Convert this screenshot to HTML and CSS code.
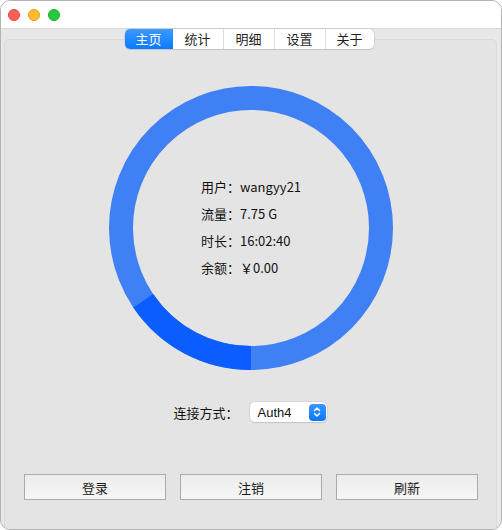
FILE: index.html
```html
<!DOCTYPE html>
<html>
<head>
<meta charset="utf-8">
<link rel="stylesheet" href="styles.css">
</head>
<body>
<div class="window">
  <div class="titlebar">
    <span class="light red"></span>
    <span class="light yellow"></span>
    <span class="light green"></span>
  </div>
  <div class="content">
    <div class="segmented">
      <div class="seg active">主页</div>
      <div class="seg">统计</div>
      <div class="seg wide">明细</div>
      <div class="seg wide">设置</div>
      <div class="seg">关于</div>
    </div>
    <div class="tabbox">
      <div class="ringwrap">
        <svg class="ring" width="284" height="284" viewBox="0 0 284 284">
          <circle cx="142" cy="142" r="130" fill="none" stroke="#3f81f5" stroke-width="24"/>
          <path d="M142 272 A130 130 0 0 1 34.2 214.7" fill="none" stroke="#0b5dff" stroke-width="24"/>
        </svg>
        <div class="info">
          <div class="line">用户：wangyy21</div>
          <div class="line">流量：7.75 G</div>
          <div class="line">时长：16:02:40</div>
          <div class="line">余额：￥0.00</div>
        </div>
      </div>
      <div class="connrow">
        <span class="connlabel">连接方式：</span>
        <div class="popup">
          <span class="popup-text">Auth4</span>
          <span class="stepper">
            <svg width="10" height="12" viewBox="0 0 10 12">
              <path d="M2.5 4.5 L5 2 L7.5 4.5" fill="none" stroke="#fff" stroke-width="1.5" stroke-linecap="round" stroke-linejoin="round"/>
              <path d="M2.5 7.5 L5 10 L7.5 7.5" fill="none" stroke="#fff" stroke-width="1.5" stroke-linecap="round" stroke-linejoin="round"/>
            </svg>
          </span>
        </div>
      </div>
      <div class="buttons">
        <button class="btn">登录</button>
        <button class="btn">注销</button>
        <button class="btn">刷新</button>
      </div>
    </div>
  </div>
</div>
</body>
</html>
```

FILE: styles.css
```css
* { box-sizing: border-box; }
html, body {
  margin: 0;
  padding: 0;
  background: #ffffff;
}
body {
  font-family: "Noto Sans CJK SC", "Noto Sans", "Liberation Sans", sans-serif;
  font-size: 13px;
  color: #1a1a1a;
}
.window {
  width: 502px;
  height: 530px;
  border: 1px solid #b4b4b4;
  border-radius: 10px;
  overflow: hidden;
  display: flex;
  flex-direction: column;
  background: #e8e8e8;
}
.titlebar {
  height: 28px;
  flex: none;
  background: #ffffff;
  border-bottom: 1px solid #d6d6d6;
  display: flex;
  align-items: center;
  gap: 8px;
  padding-left: 7px;
}
.light {
  width: 12px;
  height: 12px;
  border-radius: 50%;
  display: block;
}
.red { background: #fe5f57; border: 0.5px solid #e14640; }
.yellow { background: #febc2e; border: 0.5px solid #dfa023; }
.green { background: #28c840; border: 0.5px solid #1eab2e; }
.content {
  flex: 1;
  display: flex;
  flex-direction: column;
  align-items: center;
  padding: 0 4px 0 3px;
}
.segmented {
  position: relative;
  z-index: 2;
  display: flex;
  height: 20px;
  margin-bottom: -11px;
  background: #ffffff;
  border-radius: 5px;
  box-shadow: 0 0 0 0.5px #c4c4c4, 0 1px 1px rgba(0,0,0,0.12);
  margin-left: -3px;
}
.seg {
  width: 50px;
  height: 20px;
  line-height: 20px;
  text-align: center;
  font-size: 13px;
  color: #1f1f1f;
  border-left: 1px solid #dedede;
}
.seg.wide { width: 51px; }
.seg:first-child {
  border-left: none;
  width: 48px;
}
.seg:last-child { width: 49px; }
.seg.active {
  background: linear-gradient(#3c99ff, #0a7aff);
  color: #ffffff;
  border-radius: 5px 0 0 5px;
}
.seg.active + .seg { border-left: none; }
.tabbox {
  align-self: stretch;
  flex: 1;
  border: 1px solid #dadada;
  border-bottom: none;
  border-radius: 5px 5px 0 0;
  background: #e4e4e4;
  display: flex;
  flex-direction: column;
  align-items: center;
  margin-top: 1px;
}
.ringwrap {
  display: grid;
  margin-top: 46px;
  margin-left: 1px;
}
.ring {
  grid-area: 1 / 1;
  display: block;
}
.info {
  grid-area: 1 / 1;
  align-self: center;
  justify-self: center;
  width: 100px;
  margin-top: -3px;
}
.line {
  height: 27px;
  line-height: 27px;
  font-size: 13px;
  color: #111;
  white-space: nowrap;
}
.connrow {
  display: flex;
  align-items: center;
  margin-top: 32px;
  margin-left: -1px;
}
.connlabel {
  width: 76px;
  font-size: 13px;
  color: #111;
}
.popup {
  width: 77px;
  height: 20px;
  background: #ffffff;
  border-radius: 5px;
  box-shadow: 0 0 0 0.5px #c8c8c8, 0 1px 1px rgba(0,0,0,0.15);
  display: flex;
  align-items: center;
  justify-content: space-between;
  padding: 0 1px 0 8px;
}
.popup-text {
  font-family: "Liberation Sans", "Noto Sans", sans-serif;
  font-size: 13px;
  color: #111;
}
.stepper {
  width: 17px;
  height: 17px;
  border-radius: 4px;
  background: linear-gradient(#3a96ff, #0a78ff);
  display: flex;
  align-items: center;
  justify-content: center;
}
.stepper svg { display: block; }
.buttons {
  display: flex;
  gap: 14px;
  margin-top: 52px;
  margin-left: 1px;
}
.btn {
  width: 142px;
  height: 26px;
  border: 1px solid #ababab;
  background: linear-gradient(#ececec, #f6f6f6);
  font-family: "Noto Sans CJK SC", "Noto Sans", sans-serif;
  font-size: 13px;
  color: #1a1a1a;
  padding: 0;
  margin: 0;
}
```
